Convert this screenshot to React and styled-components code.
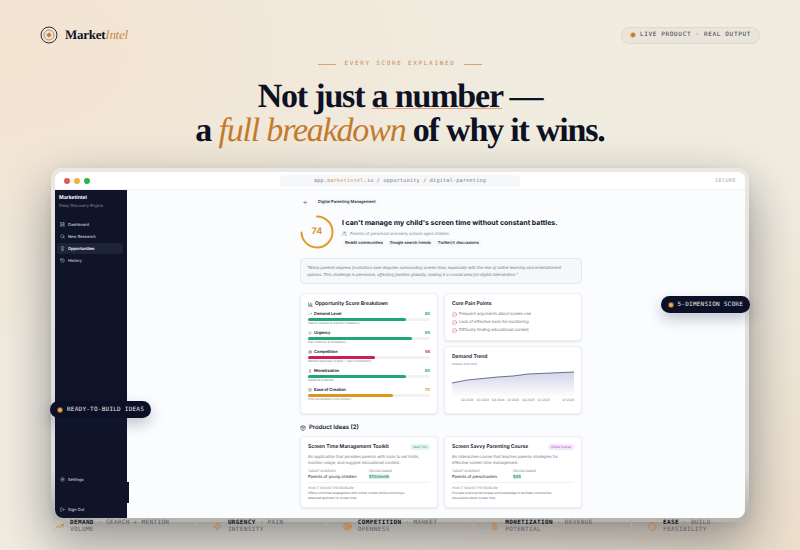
import React from 'react';
import styled, { createGlobalStyle, css } from 'styled-components';
import {
  ArrowLeft,
  ChartColumn,
  CircleSlash,
  DollarSign,
  Hexagon,
  History,
  LayoutDashboard,
  Lightbulb,
  LogOut,
  Package,
  Search,
  Settings,
  Target,
  TrendingUp,
  Users,
  Zap,
} from 'lucide-react';

const serif = "'Liberation Serif', serif";
const mono = "'DejaVu Sans Mono', monospace";
const sans = "Inter, sans-serif";

const navItems = [
  { label: 'Dashboard', icon: LayoutDashboard },
  { label: 'New Research', icon: Search },
  { label: 'Opportunities', icon: Lightbulb, active: true },
  { label: 'History', icon: History },
];

const scores = [
  { label: 'Demand Level', value: 80, note: 'Search interest & mention frequency', color: '#1fa774', icon: TrendingUp },
  { label: 'Urgency', value: 85, note: 'Pain intensity & immediacy', color: '#1fa774', icon: Zap },
  { label: 'Competition', value: 55, note: 'Market openness (higher = less competition)', color: '#cb2150', icon: Target },
  { label: 'Monetization', value: 80, note: 'Revenue potential', color: '#1fa774', icon: DollarSign },
  { label: 'Ease of Creation', value: 70, note: 'How achievable is the product', color: '#dd961c', icon: Package },
];

const painPoints = [
  'Frequent arguments about screen use',
  'Lack of effective tools for monitoring',
  'Difficulty finding educational content',
];

const quarters = ['Q2 2024', 'Q3 2024', 'Q4 2024', 'Q1 2025', 'Q2 2025', 'Q3 2025', 'Q1 2026'];

const ideas = [
  {
    title: 'Screen Time Management Toolkit',
    kind: 'SaaS Tool',
    tone: 'green',
    text: 'An application that provides parents with tools to set limits, monitor usage, and suggest educational content.',
    audience: 'Parents of young children',
    price: '$10/month',
    solution: 'Offers controlled engagement with online content while promoting a balanced approach to screen time.',
  },
  {
    title: 'Screen Savvy Parenting Course',
    kind: 'Online Course',
    tone: 'purple',
    text: 'An interactive course that teaches parents strategies for effective screen time management.',
    audience: 'Parents of preschoolers',
    price: '$49',
    solution: 'Provides practical techniques and knowledge to facilitate constructive discussions about screen time.',
  },
];

const legend = [
  { name: 'DEMAND', text: 'SEARCH + MENTION VOLUME', icon: TrendingUp },
  { name: 'URGENCY', text: 'PAIN INTENSITY', icon: Zap },
  { name: 'COMPETITION', text: 'MARKET OPENNESS', icon: Target },
  { name: 'MONETIZATION', text: 'REVENUE POTENTIAL', icon: DollarSign },
  { name: 'EASE', text: 'BUILD FEASIBILITY', icon: Hexagon },
];

const GlobalStyle = createGlobalStyle`
  * {
    box-sizing: border-box;
  }

  body {
    margin: 0;
    background: #f0ece0;
  }

  h1, h2, h3, p, ul {
    margin: 0;
    padding: 0;
  }

  svg {
    display: block;
    flex-shrink: 0;
  }
`;

const Page = styled.div`
  min-height: 100vh;
  overflow: hidden;
  background:
    radial-gradient(ellipse at 0% 10%, rgba(246, 218, 194, 0.5), transparent 45%),
    radial-gradient(ellipse at 100% 100%, rgba(232, 205, 178, 0.45), transparent 45%),
    #f0ece0;
  color: #0d1124;
  font-family: ${sans};
  text-rendering: geometricPrecision;
`;

const Header = styled.header`
  display: flex;
  align-items: center;
  justify-content: space-between;
  padding: 25px 40px 0;
`;

const Brand = styled.div`
  display: flex;
  align-items: center;
  gap: 7px;
  font: bold 13px/20px ${serif};
  letter-spacing: -0.02em;

  em {
    font-weight: normal;
    color: #c58a48;
  }
`;

const Dot = styled.i`
  width: 4px;
  height: 4px;
  margin: 0 1px;
  border-radius: 50%;
  background: ${(p) => (p.$light ? '#f0a860' : '#b8763a')};
  box-shadow: 0 0 0 1px ${(p) => (p.$light ? '#7d4d22' : '#eabf8c')};
`;

const Badge = styled.div`
  display: flex;
  align-items: center;
  gap: 4px;
  height: 17px;
  padding: 0 8px;
  border: 1px solid #dcd8cd;
  border-radius: 9px;
  background: #e9e5da;
  color: #34364a;
  font: 6px/8px ${mono};
  letter-spacing: 0.11em;
`;

const Hero = styled.section`
  display: flex;
  flex-direction: column;
  align-items: center;
  padding-top: 15px;
`;

const Eyebrow = styled.p`
  display: flex;
  align-items: center;
  gap: 8px;
  color: #c48a4e;
  font: 6px/8px ${mono};
  letter-spacing: 0.28em;

  &::before,
  &::after {
    content: '';
    width: 18px;
    height: 1px;
    background: #d3a676;
  }
`;

const Title = styled.h1`
  margin-top: 12px;
  text-align: center;
  font: bold 34px/34px ${serif};
  letter-spacing: -0.035em;

  em {
    font-weight: normal;
    color: #c37a2d;
  }

  u {
    text-decoration: underline 1px #e0a080;
    text-decoration-skip-ink: none;
    text-underline-offset: 1px;
  }
`;

const Frame = styled.main`
  position: relative;
  margin: 20px 51px 0;
  padding: 4px;
  border-radius: 11px;
  background: linear-gradient(#ebe7e2, #dddcdc 85%, #b7b4ae 98%);
  box-shadow:
    0 20px 50px rgba(15, 18, 35, 0.42),
    0 2px 8px rgba(20, 24, 45, 0.06);
`;

const Window = styled.div`
  overflow: hidden;
  border-radius: 8px;
  background: #fafcfe;
`;

const TitleBar = styled.div`
  display: grid;
  grid-template-columns: 1fr 240px 1fr;
  align-items: center;
  height: 18px;
  padding: 0 9px;
  border-bottom: 1px solid #eff1f3;
  background: #fff;
`;

const Lights = styled.div`
  display: flex;
  gap: 4px;
`;

const Light = styled.i`
  width: 6px;
  height: 6px;
  border-radius: 50%;
  background: ${(p) => p.$color};
`;

const Address = styled.div`
  height: 12px;
  border-radius: 4px;
  background: #f6f7f8;
  color: #6d707c;
  text-align: center;
  font: 5px/12px ${mono};
  letter-spacing: 0.06em;

  span {
    color: #cf8a48;
  }
`;

const Secure = styled.span`
  justify-self: end;
  color: #a9abb2;
  font: 5px/8px ${mono};
  letter-spacing: 0.1em;
`;

const AppBody = styled.div`
  display: flex;
`;

const Sidebar = styled.aside`
  position: relative;
  display: flex;
  flex-direction: column;
  width: 72px;
  padding: 5px 4px 3px 2px;
  background: #0f1429;
  color: #c5c9d6;
`;

const SideBrand = styled.div`
  padding: 0 2px;
  color: #fff;
  font-size: 5px;
  font-weight: 700;
  line-height: 7px;

  small {
    display: block;
    color: #8d93a6;
    font-size: 4px;
    font-weight: 400;
    line-height: 8px;
  }
`;

const Nav = styled.nav`
  display: flex;
  flex-direction: column;
  gap: 1px;
  margin-top: 9px;
`;

const SideFooter = styled.div`
  display: flex;
  flex-direction: column;
  gap: 19px;
  margin-top: auto;
`;

const SideLink = styled.a`
  display: flex;
  align-items: center;
  gap: 3px;
  height: 11px;
  padding: 0 3px;
  border-radius: 3px;
  color: inherit;
  font-size: 4px;
  font-weight: 500;
  line-height: 6px;
  text-decoration: none;

  svg {
    width: 5px;
    height: 5px;
  }

  ${(p) =>
    p.$active &&
    css`
      background: #1e2438;
      color: #fff;
      font-weight: 600;
    `}
`;

const SideHandle = styled.i`
  position: absolute;
  right: -2px;
  bottom: 15px;
  width: 2px;
  height: 21px;
  background: #0f1429;
`;

const Content = styled.div`
  flex: 1;
  min-width: 0;
  padding: 8px 0 10px 10px;
`;

const Column = styled.div`
  max-width: 282px;
  margin: 0 auto;
`;

const TopRow = styled.div`
  display: flex;
  align-items: center;
  gap: 7px;
  padding-left: 3px;
`;

const BackButton = styled.button`
  padding: 0;
  border: 0;
  background: none;
  color: #1a1f33;

  svg {
    width: 5px;
    height: 5px;
  }
`;

const Tag = styled.span`
  padding: 0 3px;
  border-radius: 3px;
  background: #f7f9fb;
  font-size: 4px;
  font-weight: 500;
  line-height: 8px;
`;

const Summary = styled.section`
  display: flex;
  align-items: center;
  gap: 8px;
  margin-top: 9px;
`;

const Ring = styled.div`
  display: grid;
  width: 34px;
  height: 34px;
  color: #dc962c;
  font-size: 9px;
  font-weight: 700;
  line-height: 34px;
  text-align: center;

  > * {
    grid-area: 1 / 1;
  }
`;

const ProblemTitle = styled.h2`
  font-size: 7px;
  font-weight: 700;
  line-height: 10px;
`;

const Audience = styled.p`
  display: flex;
  align-items: center;
  gap: 3px;
  margin-top: 2px;
  color: #7b8292;
  font-size: 4px;
  line-height: 8px;

  svg {
    width: 5px;
    height: 5px;
  }
`;

const Tags = styled.div`
  display: flex;
  gap: 1px;
  margin-top: 1px;
`;

const Quote = styled.p`
  margin-top: 9px;
  padding: 5px 6px;
  border: 1px solid #e3eaef;
  border-radius: 4px;
  background: #f4f8fb;
  color: #69717f;
  font-size: 4px;
  font-style: italic;
  line-height: 7px;
`;

const Grid = styled.div`
  display: grid;
  grid-template-columns: 1fr 1fr;
  gap: 6px;
  margin-top: ${(p) => p.$top}px;
`;

const Stack = styled.div`
  display: flex;
  flex-direction: column;
  gap: 5px;
`;

const Card = styled.section`
  padding: 7px 7px 6px;
  border: 1px solid #edf0f3;
  border-radius: 4px;
  background: #fff;
  box-shadow: 0 1px 2px rgba(30, 40, 70, 0.1);
`;

const CardTitle = styled.h3`
  display: flex;
  align-items: center;
  gap: 2px;
  font-size: 5px;
  font-weight: 600;
  line-height: 6px;

  svg {
    width: 5px;
    height: 5px;
  }
`;

const ScoreItem = styled.div`
  height: 15px;
  margin-top: 4px;
`;

const ScoreHead = styled.div`
  display: flex;
  align-items: center;
  gap: 2px;
  font-size: 4px;
  font-weight: 600;
  line-height: 6px;

  svg {
    width: 4px;
    height: 4px;
    color: #6b7180;
  }

  b {
    margin-left: auto;
    color: ${(p) => p.$color};
    font-weight: 700;
  }
`;

const Track = styled.div`
  height: 3px;
  margin-top: 1px;
  border-radius: 2px;
  background: #f0f2f4;
`;

const Fill = styled.div`
  height: 3px;
  border-radius: 2px;
  background: ${(p) => p.$color};
`;

const Note = styled.p`
  color: #7c8290;
  font-size: 3px;
  line-height: 5px;

  ${CardTitle} + & {
    margin-top: 2px;
  }
`;

const PainList = styled.ul`
  display: flex;
  flex-direction: column;
  gap: 2px;
  margin: 4px 0 1px;
  color: #646b7a;
  font-size: 4px;
  line-height: 6px;
  list-style: none;

  li {
    display: flex;
    align-items: center;
    gap: 2px;
  }

  svg {
    width: 5px;
    height: 5px;
    color: #c94c6c;
  }
`;

const Chart = styled.svg`
  width: 100%;
  height: 30px;
`;

const Quarters = styled.div`
  display: flex;
  gap: 3px;
  margin: 1px 0 4px;
  padding-left: 9px;
  color: #6d7382;
  font-size: 3px;
  line-height: 5px;
  white-space: nowrap;

  span:last-child {
    margin-left: auto;
  }
`;

const SectionTitle = styled.h2`
  display: flex;
  align-items: center;
  gap: 3px;
  margin-top: 10px;
  font-size: 6px;
  font-weight: 600;
  line-height: 8px;

  svg {
    width: 6px;
    height: 6px;
    color: #34395a;
  }
`;

const IdeaHead = styled.div`
  display: flex;
  align-items: center;
  justify-content: space-between;
`;

const Kind = styled.span`
  padding: 0 3px;
  border-radius: 3px;
  background: ${(p) => (p.$tone === 'green' ? '#e2f6ed' : '#f5e6fb')};
  color: ${(p) => (p.$tone === 'green' ? '#369c78' : '#a847c4')};
  font-size: 3px;
  line-height: 6px;
`;

const IdeaText = styled.p`
  margin-top: 4px;
  color: #6d7482;
  font-size: 4px;
  line-height: 6px;
`;

const Facts = styled.div`
  display: grid;
  grid-template-columns: 1fr 1fr;
  margin-top: 3px;
  padding-bottom: 3px;
  border-bottom: 1px solid #eff1f4;
`;

const Label = styled.p`
  color: #757b8a;
  font-size: 3px;
  line-height: 5px;
`;

const Value = styled.span`
  display: block;
  width: fit-content;
  font-size: 4px;
  line-height: 5px;

  ${(p) =>
    p.$price &&
    css`
      background: #dcf4e9;
      color: #188a62;
      font-weight: 500;
    `}
`;

const Solution = styled.div`
  margin-top: 3px;
  padding-right: 14px;
  color: #5f6675;
  font-size: 3px;
  line-height: 5px;
`;

// dark labels pinned on the edges of the window
const Callout = styled.div`
  position: absolute;
  top: ${(p) => p.$top}px;
  ${(p) => p.$side}: -1px;
  display: flex;
  align-items: center;
  gap: 4px;
  height: 17px;
  padding: 0 7px;
  border-radius: 9px;
  background: #0b1027;
  color: #eceae6;
  font: 6px/8px ${mono};
  letter-spacing: 0.04em;
  box-shadow: 0 6px 14px rgba(20, 26, 60, 0.25);
`;

const Legend = styled.footer`
  position: relative;
  display: flex;
  align-items: center;
  gap: 16px;
  margin: -3px 55px 0;
  padding-bottom: 17px;
`;

const LegendItem = styled.div`
  display: flex;
  align-items: center;
  gap: 6px;
  color: #5d5c61;
  font: 6px/7px ${mono};
  letter-spacing: 0.06em;

  b {
    color: #0d1124;
  }

  svg {
    width: 9px;
    height: 9px;
    color: #c4762f;
  }
`;

const Separator = styled.i`
  flex: none;
  width: 1px;
  height: 12px;
  background: #aeaaa4;
`;

function BrandMark() {
  return (
    <svg width="18" height="18" viewBox="0 0 18 18" fill="none">
      <circle cx="9" cy="9" r="8" stroke="#2a2c3c" />
      <circle cx="9" cy="9" r="5" stroke="#a9927a" />
      <circle cx="9" cy="9" r="2" fill="#c57a35" />
      <path d="M9 6v6M6 9h6" stroke="#c57a35" strokeWidth="0.5" />
    </svg>
  );
}

function ScoreRing({ value }) {
  const length = 2 * Math.PI * 15.5;
  return (
    <Ring>
      <svg width="34" height="34" viewBox="0 0 34 34" fill="none">
        <circle
          cx="17"
          cy="17"
          r="15.5"
          stroke="#e5982b"
          strokeWidth="2"
          strokeLinecap="round"
          strokeDasharray={`${(length * value) / 100} ${length}`}
          transform="rotate(-90 17 17)"
        />
      </svg>
      <span>{value}</span>
    </Ring>
  );
}

function TrendChart() {
  return (
    <Chart viewBox="0 0 120 30" preserveAspectRatio="none">
      <defs>
        <linearGradient id="trend" x1="0" y1="0" x2="0" y2="1">
          <stop offset="0" stopColor="#d2d4ea" />
          <stop offset="1" stopColor="#ffffff" />
        </linearGradient>
      </defs>
      <path d="M0 16 15 13 45 10 60 9 75 7 120 5V30H0Z" fill="url(#trend)" />
      <path d="M0 16 15 13 45 10 60 9 75 7 120 5" fill="none" stroke="#4b4f78" strokeWidth="0.8" />
    </Chart>
  );
}

function SideItem({ label, icon: Icon, active }) {
  return (
    <SideLink href="#" $active={active}>
      <Icon />
      {label}
    </SideLink>
  );
}

function ScoreRow({ label, value, note, color, icon: Icon }) {
  return (
    <ScoreItem>
      <ScoreHead $color={color}>
        <Icon />
        {label}
        <b>{value}</b>
      </ScoreHead>
      <Track>
        <Fill $color={color} style={{ width: `${value}%` }} />
      </Track>
      <Note>{note}</Note>
    </ScoreItem>
  );
}

function IdeaCard({ idea }) {
  return (
    <Card>
      <IdeaHead>
        <CardTitle>{idea.title}</CardTitle>
        <Kind $tone={idea.tone}>{idea.kind}</Kind>
      </IdeaHead>
      <IdeaText>{idea.text}</IdeaText>
      <Facts>
        <div>
          <Label>TARGET AUDIENCE</Label>
          <Value>{idea.audience}</Value>
        </div>
        <div>
          <Label>PRICING RANGE</Label>
          <Value $price>{idea.price}</Value>
        </div>
      </Facts>
      <Solution>
        <Label>HOW IT SOLVES THE PROBLEM</Label>
        <p>{idea.solution}</p>
      </Solution>
    </Card>
  );
}

function Opportunity() {
  return (
    <Column>
      <TopRow>
        <BackButton aria-label="Back">
          <ArrowLeft />
        </BackButton>
        <Tag>Digital Parenting Management</Tag>
      </TopRow>
      <Summary>
        <ScoreRing value={74} />
        <div>
          <ProblemTitle>I can't manage my child's screen time without constant battles.</ProblemTitle>
          <Audience>
            <Users />
            Parents of preschool and early school-aged children
          </Audience>
          <Tags>
            <Tag>Reddit communities</Tag>
            <Tag>Google search trends</Tag>
            <Tag>Twitter/X discussions</Tag>
          </Tags>
        </div>
      </Summary>
      <Quote>
        "Many parents express frustration over disputes surrounding screen time, especially with the rise of online
        learning and entertainment options. This challenge is pervasive, affecting families globally, making it a
        crucial area for digital intervention."
      </Quote>
      <Grid $top={9}>
        <Card>
          <CardTitle>
            <ChartColumn />
            Opportunity Score Breakdown
          </CardTitle>
          {scores.map((score) => (
            <ScoreRow key={score.label} {...score} />
          ))}
        </Card>
        <Stack>
          <Card>
            <CardTitle>Core Pain Points</CardTitle>
            <PainList>
              {painPoints.map((point) => (
                <li key={point}>
                  <CircleSlash />
                  {point}
                </li>
              ))}
            </PainList>
          </Card>
          <Card>
            <CardTitle>Demand Trend</CardTitle>
            <Note>Interest over time</Note>
            <TrendChart />
            <Quarters>
              {quarters.map((quarter) => (
                <span key={quarter}>{quarter}</span>
              ))}
            </Quarters>
          </Card>
        </Stack>
      </Grid>
      <SectionTitle>
        <Package />
        Product Ideas (2)
      </SectionTitle>
      <Grid $top={4}>
        {ideas.map((idea) => (
          <IdeaCard key={idea.title} idea={idea} />
        ))}
      </Grid>
    </Column>
  );
}

export default function App() {
  return (
    <Page>
      <GlobalStyle />
      <Header>
        <Brand>
          <BrandMark />
          <span>
            Market<em>Intel</em>
          </span>
        </Brand>
        <Badge>
          <Dot />
          LIVE PRODUCT · REAL OUTPUT
        </Badge>
      </Header>
      <Hero>
        <Eyebrow>EVERY SCORE EXPLAINED</Eyebrow>
        <Title>
          Not just <u>a number</u> —
          <br />a <em>full breakdown</em> of why it wins.
        </Title>
      </Hero>
      <Frame>
        <Window>
          <TitleBar>
            <Lights>
              <Light $color="#e05a5c" />
              <Light $color="#f0b13a" />
              <Light $color="#2fb344" />
            </Lights>
            <Address>
              app.<span>marketintel</span>.io / opportunity / digital-parenting
            </Address>
            <Secure>SECURE</Secure>
          </TitleBar>
          <AppBody>
            <Sidebar>
              <SideBrand>
                MarketIntel
                <small>Deep Discovery Engine</small>
              </SideBrand>
              <Nav>
                {navItems.map((item) => (
                  <SideItem key={item.label} {...item} />
                ))}
              </Nav>
              <SideFooter>
                <SideItem label="Settings" icon={Settings} />
                <SideItem label="Sign Out" icon={LogOut} />
              </SideFooter>
              <SideHandle />
            </Sidebar>
            <Content>
              <Opportunity />
            </Content>
          </AppBody>
        </Window>
        <Callout $side="right" $top={128}>
          <Dot $light />
          5-DIMENSION SCORE
        </Callout>
        <Callout $side="left" $top={233}>
          <Dot $light />
          READY-TO-BUILD IDEAS
        </Callout>
      </Frame>
      <Legend>
        {legend.map(({ name, text, icon: Icon }, index) => (
          <React.Fragment key={name}>
            {index > 0 && <Separator />}
            <LegendItem>
              <Icon strokeWidth={2} />
              <span>
                <b>{name}</b> · {text}
              </span>
            </LegendItem>
          </React.Fragment>
        ))}
      </Legend>
    </Page>
  );
}
